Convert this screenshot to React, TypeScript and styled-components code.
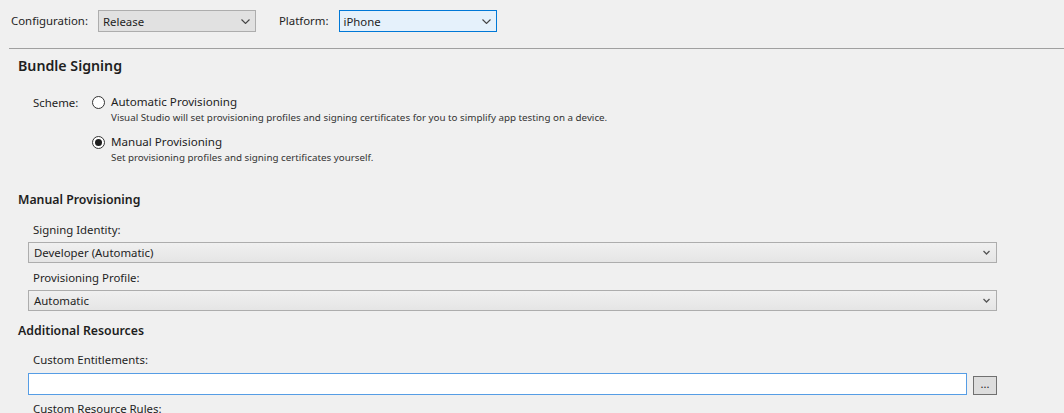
import * as React from "react";
import styled, { createGlobalStyle } from "styled-components";

const GlobalStyle = createGlobalStyle`
  body {
    margin: 0;
    background: #f0f0f0;
    font-family: "Segoe UI", "Noto Sans", sans-serif;
    font-size: 11.4px;
    color: #1e1e1e;
  }
`;

const Chevron = ({ small }: { small?: boolean }) =>
  small ? (
    <svg width="7" height="5" viewBox="0 0 7 5">
      <path d="M0.5 1 L3.5 4 L6.5 1" fill="none" stroke="#555" strokeWidth="1.3" />
    </svg>
  ) : (
    <svg width="9" height="5" viewBox="0 0 9 5">
      <path d="M0.5 0.5 L4.5 4.5 L8.5 0.5" fill="none" stroke="#444" strokeWidth="1.1" />
    </svg>
  );

const App = () => {
  return (
    <Page>
      <GlobalStyle />
      <Toolbar>
        <ToolLabel>Configuration:</ToolLabel>
        <Combo>
          <span>Release</span>
          <Chevron />
        </Combo>
        <ToolLabel $gap={23}>Platform:</ToolLabel>
        <Combo $focused>
          <span>iPhone</span>
          <Chevron />
        </Combo>
      </Toolbar>
      <Rule />

      <Section>
        <BigTitle>Bundle Signing</BigTitle>
        <SchemeRow>
          <SchemeLabel>Scheme:</SchemeLabel>
          <Options>
            <Option>
              <Radio />
              <OptionText>
                <OptionTitle>Automatic Provisioning</OptionTitle>
                <OptionDesc>
                  Visual Studio will set provisioning profiles and signing certificates for you to
                  simplify app testing on a device.
                </OptionDesc>
              </OptionText>
            </Option>
            <Option>
              <Radio $checked />
              <OptionText>
                <OptionTitle>Manual Provisioning</OptionTitle>
                <OptionDesc>Set provisioning profiles and signing certificates yourself.</OptionDesc>
              </OptionText>
            </Option>
          </Options>
        </SchemeRow>

        <SubTitle $top={26}>Manual Provisioning</SubTitle>
        <FieldLabel $top={13}>Signing Identity:</FieldLabel>
        <Dropdown>
          <span>Developer (Automatic)</span>
          <Chevron small />
        </Dropdown>
        <FieldLabel $top={7}>Provisioning Profile:</FieldLabel>
        <Dropdown>
          <span>Automatic</span>
          <Chevron small />
        </Dropdown>

        <SubTitle $top={11}>Additional Resources</SubTitle>
        <FieldLabel $top={12}>Custom Entitlements:</FieldLabel>
        <InputRow>
          <TextInput />
          <BrowseButton>...</BrowseButton>
        </InputRow>
        <FieldLabel $top={6}>Custom Resource Rules:</FieldLabel>
      </Section>
    </Page>
  );
};

export default App;

const Page = styled.div`
  width: 1064px;
  height: 413px;
  overflow: hidden;
`;

const Toolbar = styled.div`
  display: flex;
  align-items: center;
  padding: 10px 0 0 11px;
  height: 22px;
`;

const ToolLabel = styled.span<{ $gap?: number }>`
  margin-left: ${(p) => p.$gap || 0}px;
  margin-right: 10px;
  line-height: 16px;
`;

const Combo = styled.div<{ $focused?: boolean }>`
  box-sizing: border-box;
  width: 158px;
  height: 22px;
  display: flex;
  align-items: center;
  justify-content: space-between;
  padding: 0 5px 0 4px;
  border: 1px solid ${(p) => (p.$focused ? "#0078d7" : "#adadad")};
  background: ${(p) => (p.$focused ? "#e5f1fb" : "#e1e1e1")};
`;

const Rule = styled.div`
  margin: 16px 0 0 9px;
  height: 1px;
  background: #a0a0a0;
`;

const Section = styled.div`
  padding-left: 18px;
`;

const BigTitle = styled.div`
  margin-top: 7px;
  font-size: 14.2px;
  line-height: 20px;
  font-weight: 600;
`;

const SchemeRow = styled.div`
  display: flex;
  margin-top: 18px;
  padding-left: 15px;
`;

const SchemeLabel = styled.div`
  width: 59px;
  line-height: 16px;
  padding-top: 1px;
`;

const Options = styled.div`
  display: flex;
  flex-direction: column;
  gap: 9px;
`;

const Option = styled.div`
  display: flex;
  align-items: flex-start;
`;

const Radio = styled.span<{ $checked?: boolean }>`
  box-sizing: border-box;
  width: 13px;
  height: 13px;
  margin-top: 2px;
  margin-right: 6px;
  border-radius: 50%;
  border: 1px solid #333;
  background: #fff;
  display: flex;
  align-items: center;
  justify-content: center;
  &::after {
    content: "";
    width: 7px;
    height: 7px;
    border-radius: 50%;
    background: ${(p) => (p.$checked ? "#1e1e1e" : "transparent")};
  }
`;

const OptionText = styled.div`
  display: flex;
  flex-direction: column;
`;

const OptionTitle = styled.div`
  font-size: 11.6px;
  line-height: 16px;
`;

const OptionDesc = styled.div`
  margin-top: 1px;
  font-size: 9.8px;
  line-height: 14px;
  color: #333;
`;

const SubTitle = styled.div<{ $top: number }>`
  margin-top: ${(p) => p.$top}px;
  font-size: 12.3px;
  line-height: 18px;
  font-weight: 600;
`;

const FieldLabel = styled.div<{ $top: number }>`
  margin-top: ${(p) => p.$top}px;
  padding-left: 15px;
  line-height: 16px;
`;

const Dropdown = styled.div`
  box-sizing: border-box;
  margin: 4px 0 0 10px;
  width: 969px;
  height: 21px;
  display: flex;
  align-items: center;
  justify-content: space-between;
  padding: 0 6px 0 5px;
  border: 1px solid #adadad;
  background: linear-gradient(#f0f0f0, #e5e5e5);
`;

const InputRow = styled.div`
  display: flex;
  align-items: center;
  margin: 5px 0 0 10px;
`;

const TextInput = styled.div`
  box-sizing: border-box;
  width: 939px;
  height: 22px;
  border: 1px solid #569de5;
  background: #fff;
`;

const BrowseButton = styled.div`
  box-sizing: border-box;
  width: 24px;
  height: 19px;
  margin-left: 6px;
  margin-top: 2px;
  border: 1px solid #707070;
  background: #dddddd;
  font-size: 11px;
  line-height: 14px;
  text-align: center;
`;
